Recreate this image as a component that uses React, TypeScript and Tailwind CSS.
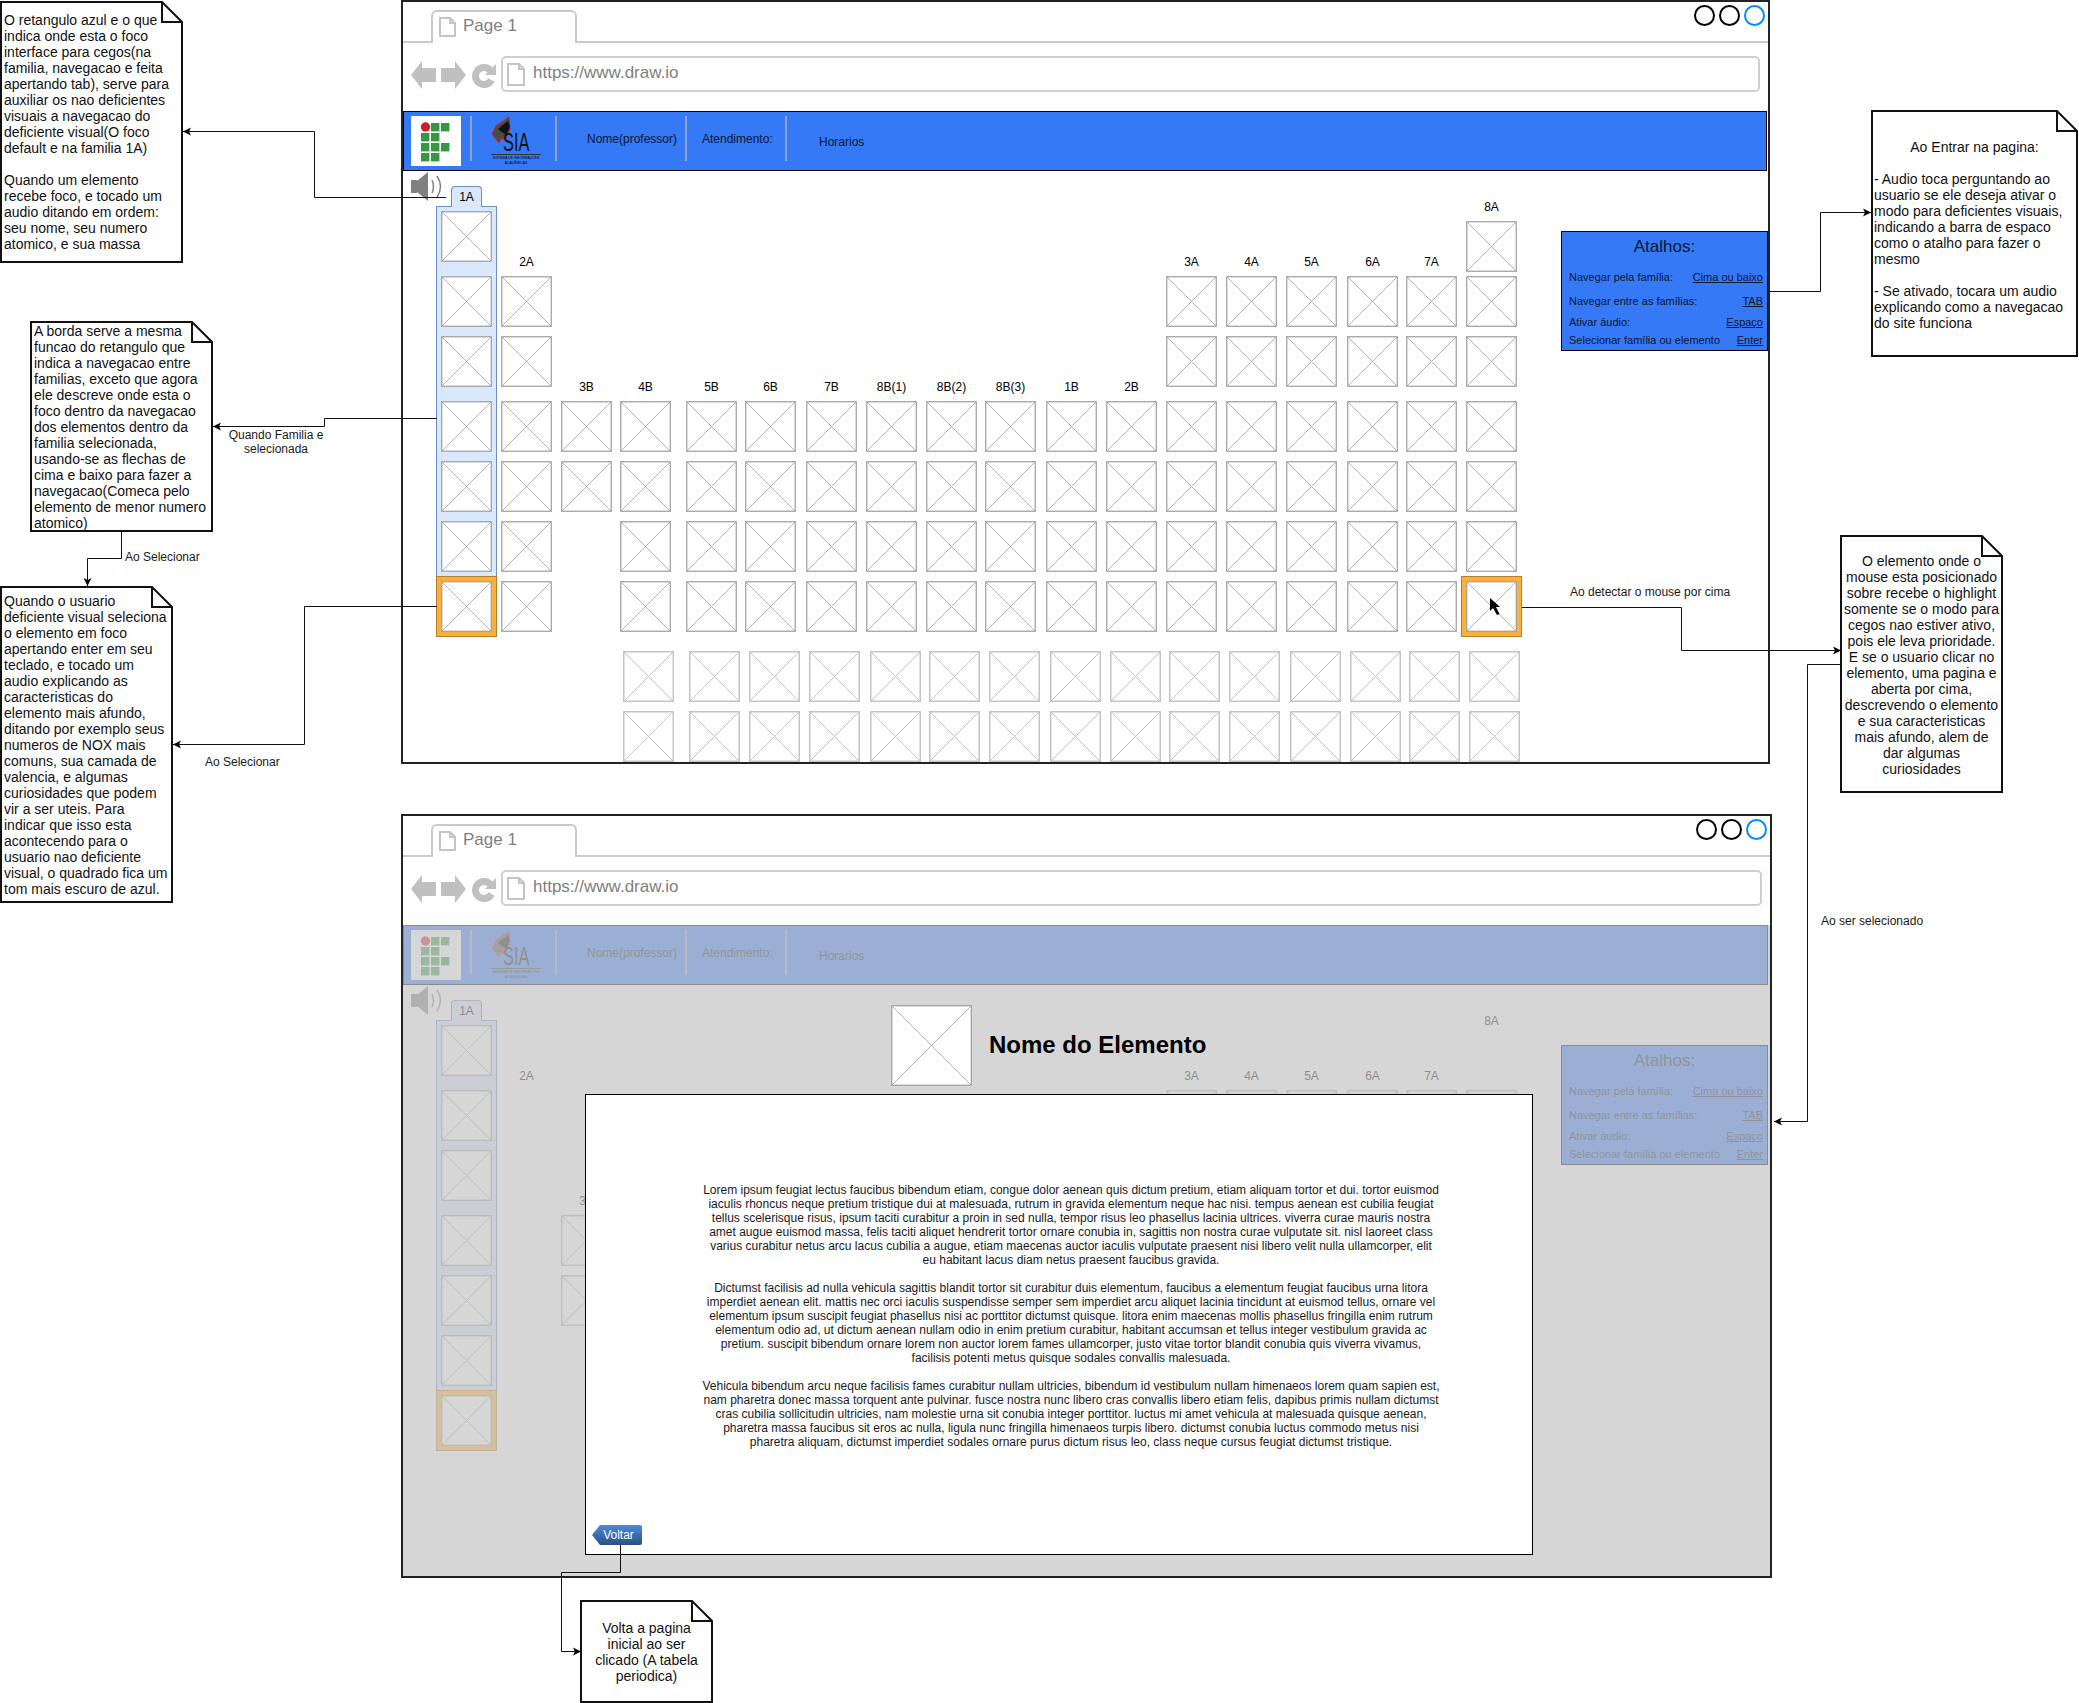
import type { ReactNode } from 'react';

const ROW_TOPS = [211, 221, 276, 336, 401, 461, 521, 581];
const TALL = [276, 336, 401, 461, 521, 581];
const LOW = [401, 461, 521, 581];

type Col = { label: string; rows: number[] };

// one entry per grid column of the table, left to right
const COLS: Col[] = [
  { label: '', rows: [211, ...TALL] },
  { label: '2A', rows: TALL },
  { label: '3B', rows: [401, 461] },
  { label: '4B', rows: LOW },
  { label: '5B', rows: LOW },
  { label: '6B', rows: LOW },
  { label: '7B', rows: LOW },
  { label: '8B(1)', rows: LOW },
  { label: '8B(2)', rows: LOW },
  { label: '8B(3)', rows: LOW },
  { label: '1B', rows: LOW },
  { label: '2B', rows: LOW },
  { label: '3A', rows: TALL },
  { label: '4A', rows: TALL },
  { label: '5A', rows: TALL },
  { label: '6A', rows: TALL },
  { label: '7A', rows: TALL },
  { label: '8A', rows: [221, ...TALL] },
];

const LOREM = [
  [
    'Lorem ipsum feugiat lectus faucibus bibendum etiam, congue dolor aenean quis dictum pretium, etiam aliquam tortor et dui. tortor euismod',
    'iaculis rhoncus neque pretium tristique dui at malesuada, rutrum in gravida elementum neque hac nisi. tempus aenean est cubilia feugiat',
    'tellus scelerisque risus, ipsum taciti curabitur a proin in sed nulla, tempor risus leo phasellus lacinia ultrices. viverra curae mauris nostra',
    'amet augue euismod massa, felis taciti aliquet hendrerit tortor ornare conubia in, sagittis non nostra curae vulputate sit. nisl laoreet class',
    'varius curabitur netus arcu lacus cubilia a augue, etiam maecenas auctor iaculis vulputate praesent nisi libero velit nulla ullamcorper, elit',
    'eu habitant lacus diam netus praesent faucibus gravida.',
  ],
  [
    'Dictumst facilisis ad nulla vehicula sagittis blandit tortor sit curabitur duis elementum, faucibus a elementum feugiat faucibus urna litora',
    'imperdiet aenean elit. mattis nec orci iaculis suspendisse semper sem imperdiet arcu aliquet lacinia tincidunt at euismod tellus, ornare vel',
    'elementum ipsum suscipit feugiat phasellus nisi ac porttitor dictumst quisque. litora enim maecenas mollis phasellus fringilla enim rutrum',
    'elementum odio ad, ut dictum aenean nullam odio in enim pretium curabitur, habitant accumsan et tellus integer vestibulum gravida ac',
    'pretium. suscipit bibendum ornare lorem non auctor lorem fames ullamcorper, justo vitae tortor blandit conubia quis viverra vivamus,',
    'facilisis potenti metus quisque sodales convallis malesuada.',
  ],
  [
    'Vehicula bibendum arcu neque facilisis fames curabitur nullam ultricies, bibendum id vestibulum nullam himenaeos lorem quam sapien est,',
    'nam pharetra donec massa torquent ante pulvinar. fusce nostra nunc libero cras convallis libero etiam felis, dapibus primis nullam dictumst',
    'cras cubilia sollicitudin ultricies, nam molestie urna sit conubia integer porttitor. luctus mi amet vehicula at malesuada quisque aenean,',
    'pharetra massa faucibus sit eros ac nulla, ligula nunc fringilla himenaeos turpis libero. dictumst conubia luctus commodo metus nisi',
    'pharetra aliquam, dictumst imperdiet sodales ornare purus dictum risus leo, class neque cursus feugiat dictumst tristique.',
  ],
];

function Placeholder({ w, h, light }: { w: number; h: number; light?: boolean }) {
  const stroke = light ? '#c4c4c4' : '#a0a0a0';
  return (
    <svg width={w} height={h} className="block">
      <rect x="0.75" y="0.75" width={w - 1.5} height={h - 1.5} fill="#fff" stroke={stroke} strokeWidth={light ? 1.5 : 1.25} />
      <path d={`M1 1 L${w - 1} ${h - 1} M${w - 1} 1 L1 ${h - 1}`} stroke={stroke} strokeWidth={light ? 1 : 0.8} fill="none" />
    </svg>
  );
}

function PageIcon({ w, h }: { w: number; h: number }) {
  return (
    <svg width={w} height={h} className="shrink-0">
      <path d={`M1 1 H${w - 6} L${w - 1} 6 V${h - 1} H1 Z M${w - 6} 1 V6 H${w - 1}`} fill="#fff" stroke="#c4c4c4" strokeWidth="2" />
    </svg>
  );
}

function NavIcons() {
  return (
    <>
      <svg width="25" height="28" className="mt-[18px] shrink-0">
        <polygon points="0,14 11,0 11,7 25,7 25,21 11,21 11,28" fill="#c0c0c0" />
      </svg>
      <svg width="25" height="28" className="ml-[5px] mt-[18px] shrink-0">
        <polygon points="25,14 14,0 14,7 0,7 0,21 14,21 14,28" fill="#c0c0c0" />
      </svg>
      <svg width="25" height="25" className="ml-[6px] mt-[20px] shrink-0">
        <path d="M18.5 7.5 A8.5 8.5 0 1 0 19.5 17" fill="none" stroke="#c0c0c0" strokeWidth="7" />
        <polygon points="24,1 24,12 13,12" fill="#c0c0c0" />
      </svg>
    </>
  );
}

function SiaLogo() {
  return (
    <div className="relative ml-[19px] h-[58px] w-[50px] shrink-0">
      <svg width="26" height="32" className="absolute left-0 top-[4px]">
        <path d="M18 1 L5 10 L1 18 L8 27 L10 22 L14 24 L19 13 Z" fill="#4a4a4a" stroke="#d01c1c" strokeWidth="1" />
        <path d="M17 5 L7 13 L15 19 L19 11 Z" fill="#111" />
      </svg>
      <span className="absolute left-[12px] top-[17px] origin-left scale-x-[0.63] text-[26px] leading-[26px] text-[#111]">SIA</span>
      <div className="absolute left-0 top-[42px] h-px w-[50px] bg-[#333]" />
      <div className="absolute left-0 top-[44px] w-[50px] whitespace-nowrap text-center text-[3.4px] leading-[5px] text-black">
        SISTEMA DE INFORMAÇÕES
        <br />
        ACADÊMICAS
      </div>
    </div>
  );
}

function IfLogo() {
  const squares = [
    [1, 0], [2, 0],
    [0, 1], [1, 1],
    [0, 2], [1, 2], [2, 2],
    [0, 3], [1, 3],
  ];
  return (
    <svg width="50" height="50" className="ml-[7px] mt-[4px] shrink-0">
      <rect width="50" height="50" fill="#fff" />
      <circle cx="14.5" cy="11" r="4.7" fill="#cc1f2a" />
      {squares.map(([c, r]) => (
        <rect key={`${c}-${r}`} x={10 + c * 10} y={7 + r * 10} width="8.4" height="8.4" fill="#339940" />
      ))}
    </svg>
  );
}

function Speaker() {
  return (
    <svg width="32" height="30" className="absolute left-[8px] top-[1px]">
      <rect x="0" y="8" width="6" height="13" fill="#808080" />
      <polygon points="6,9 17,0 17,29 6,20" fill="#808080" />
      <path d="M21 8 Q24 14.5 21 21 M26 4 Q33 14.5 26 25" fill="none" stroke="#808080" strokeWidth="1.5" />
    </svg>
  );
}

function ShortcutRow({ label, value, className }: { label: string; value: string; className: string }) {
  return (
    <div className={`flex h-[14px] items-center justify-between pl-[7px] pr-[4px] text-[11px] leading-[14px] text-[#0c1730] ${className}`}>
      <span className="whitespace-nowrap">{label}</span>
      <span className="whitespace-nowrap underline">{value}</span>
    </div>
  );
}

function Shortcuts() {
  return (
    <div className="absolute left-[1158px] top-[60px] h-[120px] w-[207px] border border-black bg-[#3579f6]">
      <div className="h-[29px] text-center text-[17px] leading-[29px] text-[#0c1730]">Atalhos:</div>
      <ShortcutRow label="Navegar pela família:" value="Cima ou baixo" className="mt-[9px]" />
      <ShortcutRow label="Navegar entre as famílias:" value="TAB" className="mt-[10px]" />
      <ShortcutRow label="Ativar áudio:" value="Espaço" className="mt-[7px]" />
      <ShortcutRow label="Selecionar família ou elemento" value="Enter" className="mt-[4px]" />
    </div>
  );
}

function Table({ dim }: { dim?: boolean }) {
  return (
    <div className="relative flex flex-1 flex-col pl-[38px] pt-[40px]">
      <Speaker />
      <div className="absolute left-[33px] top-[35px] h-[371px] w-[61px] border border-[#6c8ebf] bg-[#dae8fc]" />
      <Shortcuts />
      <div className="relative grid w-max grid-cols-[60px_60px_59px_66px_59px_61px_60px_60px_59px_61px_60px_60px_60px_60px_61px_59px_60px_51px] grid-rows-[10px_55px_60px_65px_60px_60px_60px_51px]">
        <div className="col-start-1 row-start-1 -mt-[25px] ml-[10px] h-[21px] w-[31px] self-start justify-self-start rounded-t-[4px] border border-b-0 border-[#6c8ebf] bg-[#dae8fc] text-center text-[12px] leading-[20px] text-black">
          1A
        </div>
        {COLS.map((c, ci) => {
          // the popup hides the middle of the table in the dimmed copy, and 2A has no boxes there
          const hidden = dim && c.rows === LOW;
          const rows = dim
            ? hidden || c.label === '2A'
              ? []
              : c.rows.filter((y) => y !== 221)
            : c.rows;
          return (
            <div key={ci} className="contents">
              {c.label && !hidden && (
                <div
                  className="-mt-[21px] h-[14px] w-[51px] self-start justify-self-start whitespace-nowrap text-center text-[12px] leading-[14px] text-black"
                  style={{ gridColumn: ci + 1, gridRow: ROW_TOPS.indexOf(c.rows[0]) + 1 }}
                >
                  {c.label}
                </div>
              )}
              {rows.map((y) => {
                const orange = y === 581 && (ci === 0 || (ci === 17 && !dim));
                const place = { gridColumn: ci + 1, gridRow: ROW_TOPS.indexOf(y) + 1 };
                return orange ? (
                  <div
                    key={y}
                    className="-ml-[5px] -mt-[5px] h-[61px] w-[61px] self-start justify-self-start border border-[#b27f2a] bg-[#fbb03b] p-[4px]"
                    style={place}
                  >
                    <Placeholder w={51} h={51} />
                  </div>
                ) : (
                  <div key={y} className="self-start justify-self-start" style={place}>
                    <Placeholder w={51} h={51} />
                  </div>
                );
              })}
            </div>
          );
        })}
      </div>
      {!dim && (
        <div className="ml-[182px] mt-[19px] grid w-max grid-cols-[66px_60px_60px_61px_59px_60px_61px_60px_59px_60px_61px_60px_59px_60px_51px] gap-y-[9px]">
          {Array.from({ length: 30 }, (_, i) => (
            <Placeholder key={i} w={51} h={51} light />
          ))}
        </div>
      )}
    </div>
  );
}

function Browser({ dim, className, children }: { dim?: boolean; className: string; children?: ReactNode }) {
  return (
    <div className={`absolute flex flex-col border-2 border-[#222] bg-white ${className}`}>
      <div className="flex h-[41px] shrink-0 items-start border-b-2 border-[#c9c9c9] pl-[28px]">
        <div className="z-10 mt-[8px] flex h-[33px] w-[146px] items-start gap-[7px] rounded-t-[6px] border-2 border-b-0 border-[#c9c9c9] bg-white pl-[6px] pt-[5px] text-[17px] leading-[18px] text-[#808080]">
          <PageIcon w={17} h={20} />
          <span>Page 1</span>
        </div>
        <div className="ml-auto mr-[3px] mt-[3px] flex gap-[4px]">
          <div className="h-[21px] w-[21px] rounded-full border-2 border-black" />
          <div className="h-[21px] w-[21px] rounded-full border-2 border-black" />
          <div className="h-[21px] w-[21px] rounded-full border-2 border-[#008cff]" />
        </div>
      </div>
      <div className="flex h-[68px] shrink-0 items-start pl-[8px] pr-[8px]">
        <NavIcons />
        <div className="ml-[4px] mt-[13px] flex h-[36px] flex-1 items-center gap-[8px] rounded-[5px] border-2 border-[#cfcfcf] pl-[4px] text-[17px] text-[#808080]">
          <PageIcon w={18} h={23} />
          <span className="-mt-[2px]">https://www.draw.io</span>
        </div>
      </div>
      <div className={`flex h-[60px] shrink-0 items-start border border-black bg-[#3579f6] text-[12px] leading-[14px] text-[#0c1730] ${dim ? 'mr-[2px]' : 'mr-[1px]'}`}>
        <IfLogo />
        <div className="ml-[9px] mt-[4px] h-[45px] w-[2px] bg-[#8ea3c9]" />
        <SiaLogo />
        <div className="ml-[14px] mt-[4px] h-[45px] w-[2px] bg-[#8ea3c9]" />
        <span className="ml-[30px] mt-[20px] w-[90px] whitespace-nowrap">Nome(professor)</span>
        <div className="ml-[8px] mt-[4px] h-[45px] w-[2px] bg-[#8ea3c9]" />
        <span className="ml-[15px] mt-[20px] w-[70px] whitespace-nowrap">Atendimento:</span>
        <div className="ml-[13px] mt-[4px] h-[45px] w-[2px] bg-[#8ea3c9]" />
        <span className="ml-[32px] mt-[23px] whitespace-nowrap">Horarios</span>
      </div>
      <Table dim={dim} />
      {dim && <div className="absolute inset-x-0 bottom-0 top-[109px] bg-[rgba(197,197,197,0.71)]" />}
      {children}
    </div>
  );
}

function Note({ w, h, className, children }: { w: number; h: number; className: string; children: ReactNode }) {
  return (
    <div className={`absolute ${className}`}>
      <svg width={w} height={h} className="absolute left-0 top-0">
        <path d={`M1 1 H${w - 21} L${w - 1} 21 V${h - 1} H1 Z`} fill="#fff" stroke="#111" strokeWidth="2" />
        <path d={`M${w - 21} 1 V21 H${w - 1}`} fill="none" stroke="#111" strokeWidth="2" />
      </svg>
      <div className="relative whitespace-pre text-[14px] leading-[16px] text-[#111]">{children}</div>
    </div>
  );
}

function Label({ className, children }: { className: string; children: ReactNode }) {
  return <div className={`absolute whitespace-nowrap text-[12px] leading-[14px] text-[#1a1a1a] ${className}`}>{children}</div>;
}

function Connectors() {
  const lines = [
    '446,197.5 314.5,197.5 314.5,131.5 183,131.5',
    '437,418.5 324.5,418.5 324.5,426.5 213,426.5',
    '121.5,532 121.5,558.5 87.5,558.5 87.5,586',
    '437,606.5 304.5,606.5 304.5,744.5 173,744.5',
    '1522,607.5 1681.5,607.5 1681.5,650.5 1841,650.5',
    '1841,664.5 1807.5,664.5 1807.5,1121.5 1774,1121.5',
    '1768,291.5 1820.5,291.5 1820.5,212.5 1871,212.5',
    '620.5,1545 620.5,1572.5 561.5,1572.5 561.5,1651.5 581,1651.5',
  ];
  return (
    <svg width="2079" height="1703" className="pointer-events-none absolute left-0 top-0 z-20">
      <defs>
        <marker id="arrow" markerUnits="userSpaceOnUse" markerWidth="9" markerHeight="9" refX="8" refY="4.5" orient="auto">
          <path d="M8 4.5 L0 0.5 L2 4.5 L0 8.5 Z" fill="#000" />
        </marker>
      </defs>
      {lines.map((p) => (
        <polyline key={p} points={p} fill="none" stroke="#111" strokeWidth="1" markerEnd="url(#arrow)" />
      ))}
      {/* mouse pointer over the 8A cell */}
      <polygon points="1490,598 1490,611 1493,608 1497,615 1499.5,614 1496,607 1500,607" fill="#000" />
    </svg>
  );
}

export default function App() {
  return (
    <div className="relative h-[1703px] w-[2079px] overflow-hidden bg-white font-['Liberation_Sans',Arial,sans-serif]">
      <Browser className="left-[401px] top-0 h-[764px] w-[1369px]" />

      <Browser dim className="left-[401px] top-[814px] h-[764px] w-[1371px]">
        <div className="absolute left-[488px] top-[189px]">
          <Placeholder w={81} h={81} />
        </div>
        <div className="absolute left-[586px] top-[214px] whitespace-nowrap text-[24px] font-bold leading-[30px] text-black">
          Nome do Elemento
        </div>
        <div className="absolute left-[182px] top-[278px] h-[461px] w-[948px] border border-black bg-white pt-[88px] text-[12px] leading-[14px] text-[#1a1a1a]">
          <div className="ml-[117px] flex w-[736px] flex-col gap-[14px] whitespace-nowrap text-center">
            {LOREM.map((p) => (
              <div key={p[0]} className="flex flex-col items-center">
                {p.map((l) => (
                  <span key={l}>{l}</span>
                ))}
              </div>
            ))}
          </div>
          <div className="absolute bottom-[9px] left-[6px] flex h-[20px] w-[50px] items-center justify-center rounded-r-[2px] bg-linear-to-b from-[#4d8be0] to-[#2a5080] pl-[3px] text-[12px] text-white [clip-path:polygon(0_50%,8px_0,100%_0,100%_100%,8px_100%)]">
            Voltar
          </div>
        </div>
      </Browser>

      <Note w={183} h={262} className="left-0 top-[1px] w-[183px] pl-[4px] pt-[11px]">
        {`O retangulo azul e o que
indica onde esta o foco
interface para cegos(na
familia, navegacao e feita
apertando tab), serve para
auxiliar os nao deficientes
visuais a navegacao do
deficiente visual(O foco
default e na familia 1A)

Quando um elemento
recebe foco, e tocado um
audio ditando em ordem:
seu nome, seu numero
atomico, e sua massa`}
      </Note>
      <Note w={183} h={211} className="left-[30px] top-[321px] w-[183px] pl-[4px] pt-[2px]">
        {`A borda serve a mesma
funcao do retangulo que
indica a navegacao entre
familias, exceto que agora
ele descreve onde esta o
foco dentro da navegacao
dos elementos dentro da
familia selecionada,
usando-se as flechas de
cima e baixo para fazer a
navegacao(Comeca pelo
elemento de menor numero
atomico)`}
      </Note>
      <Note w={173} h={317} className="left-0 top-[586px] w-[173px] pl-[4px] pt-[7px]">
        {`Quando o usuario
deficiente visual seleciona
o elemento em foco
apertando enter em seu
teclado, e tocado um
audio explicando as
caracteristicas do
elemento mais afundo,
ditando por exemplo seus
numeros de NOX mais
comuns, sua camada de
valencia, e algumas
curiosidades que podem
vir a ser uteis. Para
indicar que isso esta
acontecendo para o
usuario nao deficiente
visual, o quadrado fica um
tom mais escuro de azul.`}
      </Note>
      <Note w={207} h={247} className="left-[1871px] top-[110px] w-[207px] pl-[3px] pt-[29px]">
        <div className="pr-[3px] text-center">Ao Entrar na pagina:</div>
        {`
- Audio toca perguntando ao
usuario se ele deseja ativar o
modo para deficientes visuais,
indicando a barra de espaco
como o atalho para fazer o
mesmo

- Se ativado, tocara um audio
explicando como a navegacao
do site funciona`}
      </Note>
      <Note w={163} h={258} className="left-[1840px] top-[535px] w-[163px] pt-[18px] text-center">
        {`O elemento onde o
mouse esta posicionado
sobre recebe o highlight
somente se o modo para
cegos nao estiver ativo,
pois ele leva prioridade.
E se o usuario clicar no
elemento, uma pagina e
aberta por cima,
descrevendo o elemento
e sua caracteristicas
mais afundo, alem de
dar algumas
curiosidades`}
      </Note>
      <Note w={133} h={103} className="left-[580px] top-[1600px] w-[133px] pt-[20px] text-center">
        {`Volta a pagina
inicial ao ser
clicado (A tabela
periodica)`}
      </Note>

      <Connectors />

      <Label className="left-[216px] top-[428px] w-[120px] text-center">
        Quando Familia e
        <br />
        selecionada
      </Label>
      <Label className="left-[125px] top-[550px]">Ao Selecionar</Label>
      <Label className="left-[205px] top-[755px]">Ao Selecionar</Label>
      <Label className="left-[1570px] top-[585px]">Ao detectar o mouse por cima</Label>
      <Label className="left-[1821px] top-[914px]">Ao ser selecionado</Label>
    </div>
  );
}
